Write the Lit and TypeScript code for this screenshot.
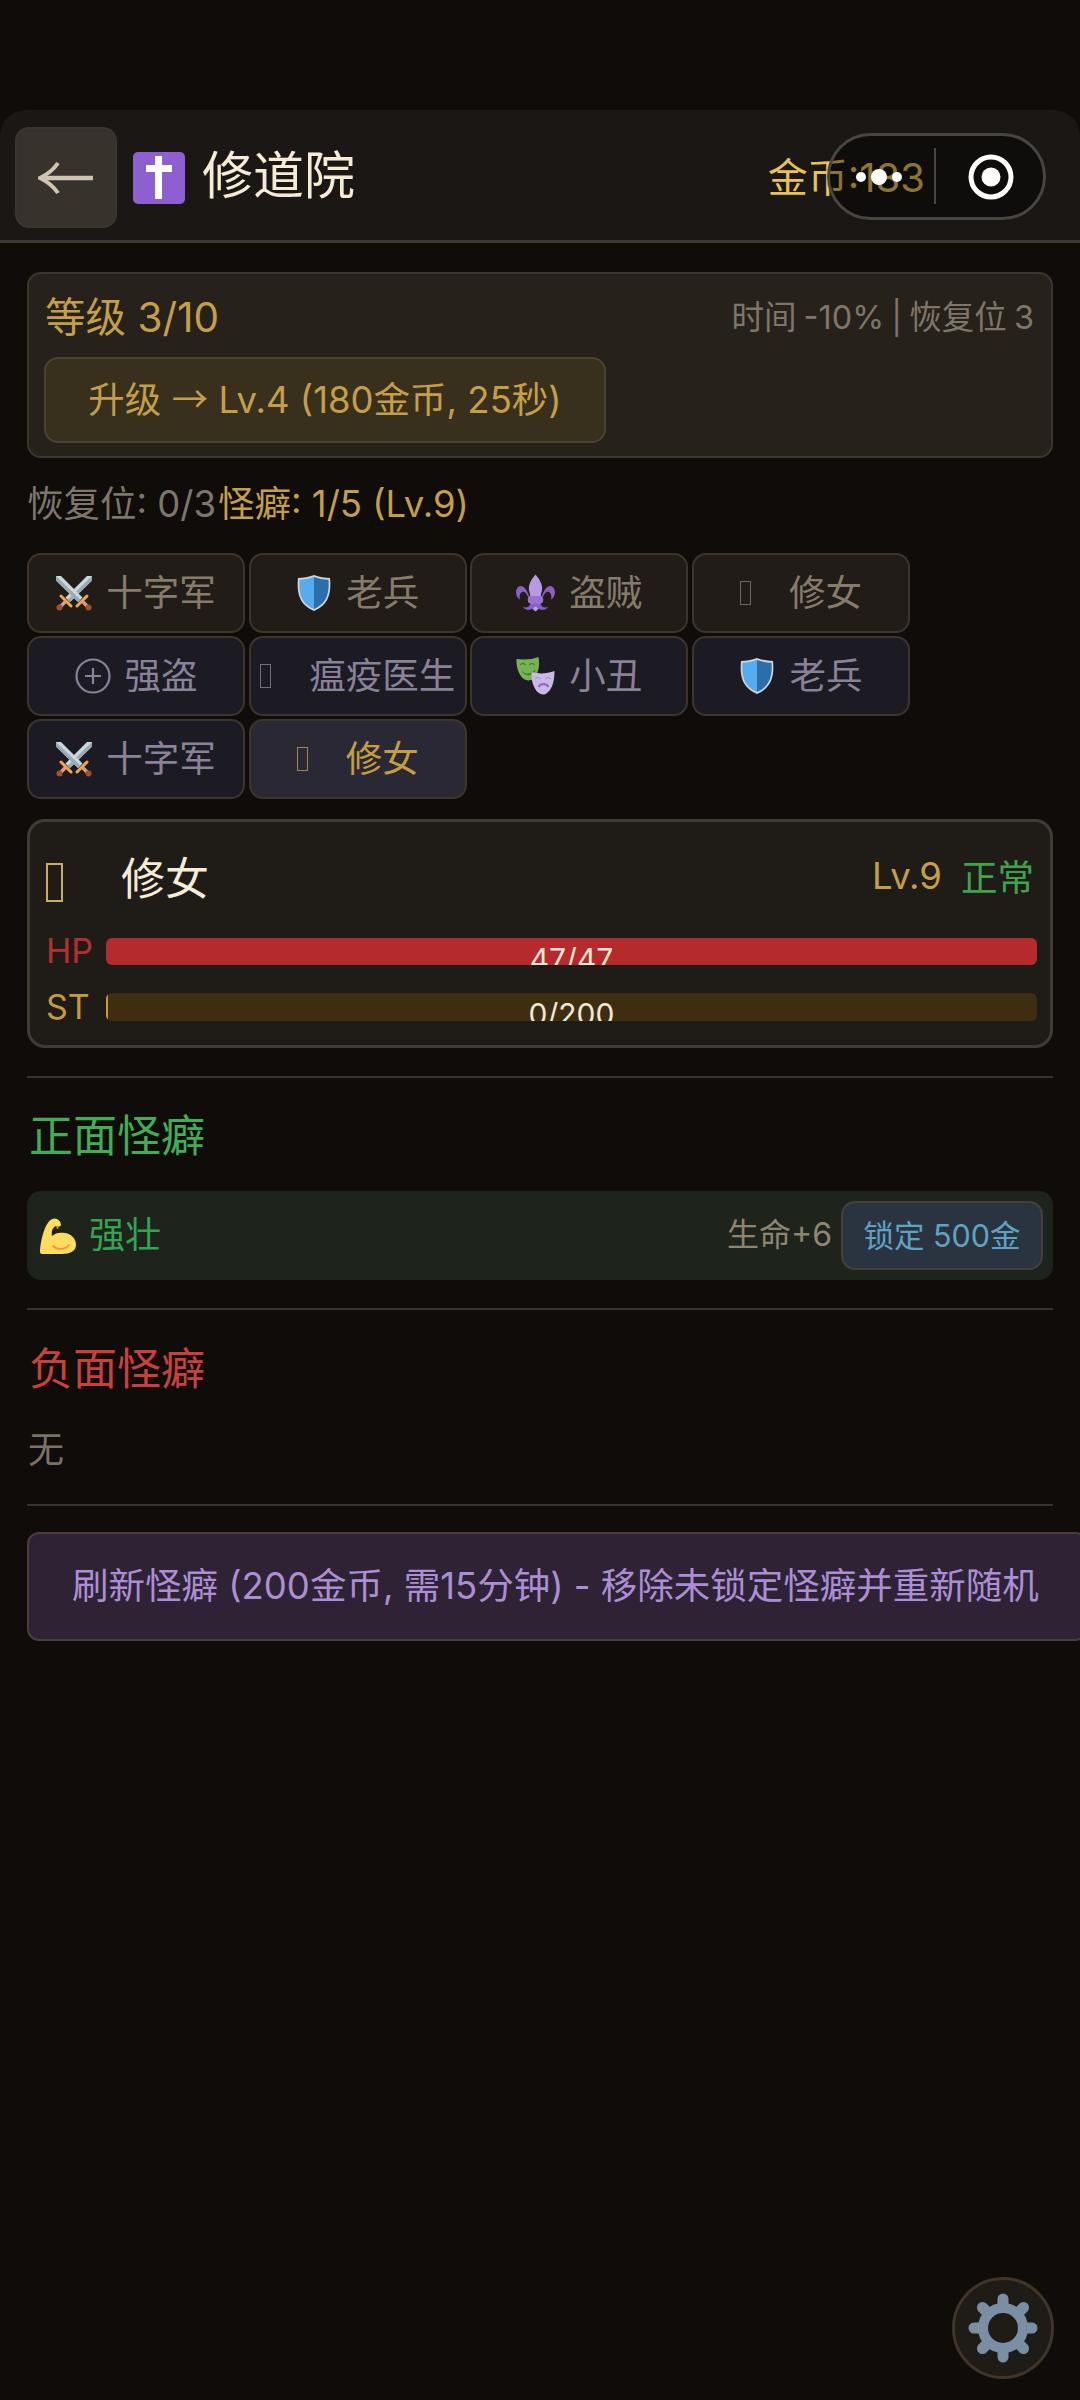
import { LitElement, html, css, svg } from "lit";
import { customElement } from "lit/decorators.js";

const swords = html`<svg class="emo" viewBox="0 0 36 36">
  <path d="M36 1 35.500 6 14 27 9.500 22.500 31 1z" fill="#ccd6dd"/><path d="M36 1 11.500 24.800 14 27 35.500 6z" fill="#99aab5"/>
  <path d="M0 1 .5 6 22 27 26.500 22.500 5 1z" fill="#ccd6dd"/><path d="M0 1 24.500 24.800 22 27 .5 6z" fill="#99aab5"/>
  <path d="M5 21 15 31" stroke="#f4a83c" stroke-width="3" stroke-linecap="round"/><path d="M31 21 21 31" stroke="#f4a83c" stroke-width="3" stroke-linecap="round"/>
  <path d="M10 26 4 32" stroke="#d99e82" stroke-width="3.500"/><path d="M26 26 32 32" stroke="#d99e82" stroke-width="3.500"/>
  <circle cx="3.500" cy="32.500" r="3" fill="#a0522d"/><circle cx="32.500" cy="32.500" r="3" fill="#a0522d"/>
</svg>`;
const shield = html`<svg class="emo" viewBox="0 0 36 36">
  <path d="M18 0C13 2 7 3 2 3 1 14 1 29 18 36 35 29 35 14 34 3 29 3 23 2 18 0z" fill="#ccd6dd"/>
  <path d="M18 2C14 3.500 8 4.700 3.500 4.700 3 15 3 27.500 18 34z" fill="#55acee"/>
  <path d="M18 2C22 3.500 28 4.700 32.500 4.700 33 15 33 27.500 18 34z" fill="#2a6fa8"/>
</svg>`;
const fleur = html`<svg class="emo wide" viewBox="0 0 40 38">
  <path d="M20 0C14 7 12.500 12 13.500 17 14.500 21 15 23 15 26H25C25 23 25.500 21 26.500 17 27.500 12 26 7 20 0z" fill="#b79ae4"/>
  <path d="M20 38C17 36 15.500 33 15 30H25C24.500 33 23 36 20 38z" fill="#b79ae4"/>
  <path d="M13 21C10 12 5 10 2 13-1.500 17 0 23 4 26 3 21 5 17 8.500 18 11 19 12 23 14 26 15 26 14 23 13 21z" fill="#8a5fc6"/>
  <path d="M27 21C30 12 35 10 38 13 41.500 17 40 23 36 26 37 21 35 17 31.500 18 29 19 28 23 26 26 25 26 26 23 27 21z" fill="#8a5fc6"/>
  <path d="M7 33C12 35.500 15 32 15 28H25C25 32 28 35.500 33 33 30 37.500 24 37 21 33H19C16 37 10 37.500 7 33z" fill="#8a5fc6"/>
  <rect x="12" y="22" width="16" height="8" rx="4" fill="#9a72d4"/>
</svg>`;
const masks = html`<svg class="emo wide" viewBox="0 0 38 38">
  <path d="M0 2C7 3 16 2.500 22 0 23.500 8 22 17 17 22 14 24 9 24 6 21 2 17-.5 9 0 2z" fill="#77b255"/>
  <path d="M5 13C8 18 15 18 19 12 18 20 7 20 5 13z" fill="#3e721d"/>
  <path d="M4 8C5 6 8 6 9 8M13 8C14 6 17 6 18 8" fill="none" stroke="#3e721d" stroke-width="1.200"/>
  <path d="M15 15C22 17 30 17 38 14 38 24 36 33 29 37 26 38.500 23 37 20 34 16 29 14.500 22 15 15z" fill="#cbb8e9"/>
  <path d="M19 22C20 20 23 20 24 22M29 22C30 20 33 20 34 22" fill="none" stroke="#aa8dd8" stroke-width="1.200"/>
  <path d="M22 30C24 26 30 26 32 30" fill="none" stroke="#9266cc" stroke-width="1.800"/>
</svg>`;
const plus = html`<svg class="emo" viewBox="0 0 36 36" fill="none" stroke="#8a8299" stroke-width="2.200">
  <circle cx="18" cy="18" r="16.500"/><path d="M18 10V26M10 18H26"/>
</svg>`;
const muscle = html`<svg class="muscle" viewBox="0 0 36 36">
  <path d="M0 34C0 26 3 14 6 8 9 2 13-1 17 1 19 2 21 4 21 7 20 9 18 9 16 8 13 9 11 13 12 18 15 15 20 14 25 15 32 16 36 21 36 27 36 33 30 36 22 36H4C2 36 0 36 0 34z" fill="#ffdc5d"/>
  <path d="M16 8 19 10 17 11z" fill="#ffac33"/>
  <path d="M13 28C17 32 25 32 29 27" fill="none" stroke="#ef9645" stroke-width="1.800" stroke-linecap="round"/>
</svg>`;
const tofu = html`<span class="slot"><span class="tofu"></span></span>`;

interface Hero { icon: unknown; name: string; kind: "a" | "b" | "c"; }
const heroes: Hero[] = [
  { icon: swords, name: "十字军", kind: "a" },
  { icon: shield, name: "老兵", kind: "a" },
  { icon: fleur, name: "盗贼", kind: "a" },
  { icon: tofu, name: "修女", kind: "a" },
  { icon: plus, name: "强盗", kind: "b" },
  { icon: tofu, name: "瘟疫医生", kind: "b" },
  { icon: masks, name: "小丑", kind: "b" },
  { icon: shield, name: "老兵", kind: "b" },
  { icon: swords, name: "十字军", kind: "b" },
  { icon: tofu, name: "修女", kind: "c" },
];

@customElement("app-root")
export class AppRoot extends LitElement {
  static styles = css`
    :host {
      display: block;
      position: relative;
      width: 1080px;
      height: 2400px;
      overflow: hidden;
      background: #0f0c0a;
      font-family: Inter, "Noto Sans CJK SC", sans-serif;
      color: #8a8070;
    }
    .header {
      margin-top: 110px;
      height: 133px;
      box-sizing: border-box;
      display: flex;
      align-items: center;
      background: #1a1714;
      border-radius: 26px 26px 0 0;
      border-bottom: 3px solid #3d3830;
      padding: 5px 155px 0 15px;
    }
    .back {
      width: 102px;
      height: 101px;
      box-sizing: border-box;
      background: #38322c;
      border: 2px solid #3b352f;
      border-radius: 14px;
      display: flex;
      align-items: center;
      justify-content: center;
    }
    .back svg { width: 56px; height: 34px; }
    .cross { width: 52px; height: 52px; margin-left: 16px; flex: none; }
    .title { font-size: 51px; color: #f5ecd7; margin: 0 0 3px 17px; flex: 1; line-height: 60px; }
    .gold { font-size: 40px; color: #e8c34f; white-space: nowrap; margin-bottom: 6px; }
    .capsule {
      position: absolute;
      left: 827px;
      top: 133px;
      width: 219px;
      height: 87px;
      box-sizing: border-box;
      border: 3px solid #4a4540;
      border-radius: 44px;
      background: rgba(0, 0, 0, 0.4);
    }
    .capsule svg { display: block; width: 100%; height: 100%; }
    .content { padding: 0 27px; display: flex; flex-direction: column; align-items: stretch; }
    .level {
      margin-top: 29px;
      height: 186px;
      box-sizing: border-box;
      background: #26211b;
      border: 2px solid #3d362d;
      border-radius: 14px;
      padding: 0 17px 0 15px;
    }
    .level-top { display: flex; justify-content: space-between; align-items: center; height: 83px; box-sizing: border-box; padding-bottom: 3px; }
    .level-name { font-size: 40.5px; color: #c49f48; margin-left: 1px; }
    .level-info { font-size: 32.5px; color: #7f766a; word-spacing: -2px; }
    .upgrade {
      width: 562px;
      height: 86px;
      box-sizing: border-box;
      background: #38301d;
      border: 2px solid #4a4233;
      border-radius: 14px;
      color: #c49f48;
      font-size: 36.5px;
      display: flex;
      align-items: center;
      justify-content: center;
      white-space: pre;
      padding-bottom: 5px;
    }
    .arrow { font-family: Roboto, "Noto Sans CJK SC", sans-serif; }
    .stats { font-size: 36.5px; height: 95px; box-sizing: border-box; display: flex; align-items: center; padding-bottom: 9px; color: #7d766c; }
    .stats b { font-weight: 400; color: #c49f48; margin-left: 2px; }
    .grid { display: grid; grid-template-columns: repeat(4, 218px); column-gap: 3.67px; row-gap: 3px; }
    .hero {
      height: 80px;
      box-sizing: border-box;
      border: 2px solid #3d342c;
      border-radius: 14px;
      display: flex;
      align-items: center;
      justify-content: center;
      gap: 14px;
      font-size: 36.5px;
      white-space: nowrap;
    }
    .hero > .label { margin-bottom: 5px; }
    .hero.a { background: #211c18; color: #857c6b; }
    .hero.b { background: #1c1b24; color: #8a8299; }
    .hero.c { background: #2a2835; color: #c49f3f; }
    .emo { width: 36px; height: 36px; flex: none; }
    .emo.wide { width: 39px; height: 38px; }
    .slot { width: 35px; flex: none; display: flex; align-items: center; }
    .tofu { display: block; width: 11px; height: 24px; box-sizing: border-box; border: 1px solid currentColor; opacity: 0.8; }
    .detail {
      margin-top: 20px;
      height: 229px;
      box-sizing: border-box;
      background: #1f1c18;
      border: 3px solid #3f3b35;
      border-radius: 18px;
      padding: 0 13px 0 16px;
    }
    .detail-top { display: flex; align-items: center; height: 110px; margin-bottom: 5px; padding-right: 3px; }
    .big-tofu { width: 17px; height: 39px; box-sizing: border-box; border: 2px solid #c9ad60; margin-top: 11px; }
    .name { font-size: 44px; color: #f5ecd7; margin: 0 0 3px 58px; flex: 1; }
    .lv { font-size: 36.5px; color: #c49f48; margin-bottom: 3px; }
    .ok { font-size: 36.5px; color: #3fa34d; margin: 0 0 3px 19px; }
    .stat-row { display: flex; align-items: center; gap: 0; }
    .stat-row + .stat-row { margin-top: 28px; }
    .stat-label { width: 60px; flex: none; font-size: 34px; line-height: 28px; }
    .bar {
      position: relative;
      flex: 1;
      overflow: hidden;
      border-radius: 6px;
      text-align: center;
      color: #f2e6d8;
      font-size: 30px;
    }
    .fill { position: absolute; left: 0; top: 0; bottom: 0; }
    .bar span { position: relative; }
    .hp .stat-label { color: #b52f2f; }
    .hp .bar { height: 27px; line-height: 42px; background: #3c1a1a; }
    .hp .fill { background: #b52b2b; }
    .st .stat-label { color: #c79a3a; }
    .st .bar { height: 28px; line-height: 42px; background: #3e2e10; }
    .st .fill { background: #c79a3a; }
    hr { border: 0; height: 2px; background: #3a322b; margin: 0; }
    .hr1 { margin-top: 28px; }
    h2 { font-size: 44px; font-weight: 400; margin: 0 0 0 2px; line-height: 60px; }
    .pos { color: #3fae57; margin-top: 28px; }
    .neg { color: #c9403f; margin-top: 29px; }
    .trait {
      margin-top: 25px;
      height: 89px;
      box-sizing: border-box;
      background: #1e241c;
      border-radius: 14px;
      display: flex;
      align-items: center;
      padding: 0 10px 0 13px;
    }
    .muscle { width: 36px; height: 36px; flex: none; }
    .trait-name { font-size: 36px; color: #35a353; margin: 0 0 8px 13px; flex: 1; }
    .trait-val { font-size: 32px; color: #8f8672; margin: 0 9px 8px 0; }
    .lock {
      width: 202px;
      height: 69px;
      box-sizing: border-box;
      background: #2a3440;
      border: 2px solid #46403a;
      border-radius: 14px;
      font-size: 30.5px;
      color: #5fa3c4;
      display: flex;
      align-items: center;
      justify-content: center;
      white-space: nowrap;
      padding-bottom: 3px;
    }
    .hr2 { margin-top: 28px; }
    .none { font-size: 36px; color: #7a7268; margin: 26px 0 0 1px; line-height: 50px; }
    .hr3 { margin-top: 29px; }
    .refresh {
      margin-top: 26px;
      width: 1060px;
      height: 109px;
      box-sizing: border-box;
      background: #2e2234;
      border: 2px solid #4a4035;
      border-radius: 12px;
      color: #ab8fd4;
      font-size: 36.500px;
      display: flex;
      align-items: center;
      padding: 0 0 6px 43px;
      white-space: nowrap;
      flex: none;
    }
    .gear {
      position: absolute;
      left: 952px;
      top: 2277px;
      width: 102px;
      height: 102px;
      box-sizing: border-box;
      border: 3px solid #40352c;
      border-radius: 50%;
      background: #1f1b17;
      display: flex;
      align-items: center;
      justify-content: center;
    }
    .gear svg { width: 70px; height: 70px; }
  `;

  render() {
    const teeth = [0, 45, 90, 135, 180, 225, 270, 315];
    return html`
      <div class="header">
        <div class="back">
          <svg viewBox="0 0 56 34" fill="none" stroke="#cfc4b0" stroke-width="4.500">
            <path d="M4 17H55"/><path d="M20 2C16 8 10 13 2 17 10 21 16 26 20 32" stroke-width="4"/>
          </svg>
        </div>
        <svg class="cross" viewBox="0 0 52 52">
          <rect width="52" height="52" rx="5" fill="#8e5fd0"/>
          <path d="M22 4H29V13H39V20H29V47H22V20H13V13H22z" fill="#fff"/>
        </svg>
        <div class="title">修道院</div>
        <div class="gold">金币:183</div>
      </div>
      <div class="capsule">
        <svg viewBox="0 0 213 81">
          <circle cx="31" cy="41" r="5" fill="#fff"/><circle cx="49" cy="41" r="8" fill="#fff"/><circle cx="67" cy="41" r="5" fill="#fff"/>
          <rect x="104" y="12" width="2" height="56" fill="#4a4540"/>
          <circle cx="161" cy="41" r="20" fill="none" stroke="#fff" stroke-width="5"/><circle cx="161" cy="41" r="9.500" fill="#fff"/>
        </svg>
      </div>
      <div class="content">
        <div class="level">
          <div class="level-top">
            <span class="level-name">等级 3/10</span>
            <span class="level-info">时间 -10% | 恢复位 3</span>
          </div>
          <div class="upgrade"><span>升级 <span class="arrow">→</span> Lv.4 (180金币, 25秒)</span></div>
        </div>
        <div class="stats">恢复位: 0/3<b>怪癖: 1/5 (Lv.9)</b></div>
        <div class="grid">
          ${heroes.map(h => html`<div class="hero ${h.kind}">${h.icon}<span class="label">${h.name}</span></div>`)}
        </div>
        <div class="detail">
          <div class="detail-top">
            <span class="big-tofu"></span>
            <span class="name">修女</span>
            <span class="lv">Lv.9</span>
            <span class="ok">正常</span>
          </div>
          <div class="stat-row hp">
            <span class="stat-label">HP</span>
            <div class="bar"><div class="fill" style="width:100%"></div><span>47/47</span></div>
          </div>
          <div class="stat-row st">
            <span class="stat-label">ST</span>
            <div class="bar"><div class="fill" style="width:0.2%"></div><span>0/200</span></div>
          </div>
        </div>
        <hr class="hr1" />
        <h2 class="pos">正面怪癖</h2>
        <div class="trait">
          ${muscle}
          <span class="trait-name">强壮</span>
          <span class="trait-val">生命+6</span>
          <div class="lock">锁定 500金</div>
        </div>
        <hr class="hr2" />
        <h2 class="neg">负面怪癖</h2>
        <div class="none">无</div>
        <hr class="hr3" />
        <div class="refresh">刷新怪癖 (200金币, 需15分钟) - 移除未锁定怪癖并重新随机</div>
      </div>
      <div class="gear">
        <svg viewBox="0 0 70 70">
          ${teeth.map(a => svg`<path d="M35 35V6" stroke="#7a8fa3" stroke-width="11" stroke-linecap="round" transform="rotate(${a} 35 35)"/>`)}
          <circle cx="35" cy="35" r="20" fill="none" stroke="#7a8fa3" stroke-width="10"/>
          <circle cx="35" cy="35" r="15" fill="#1f1b17"/>
        </svg>
      </div>
    `;
  }
}
